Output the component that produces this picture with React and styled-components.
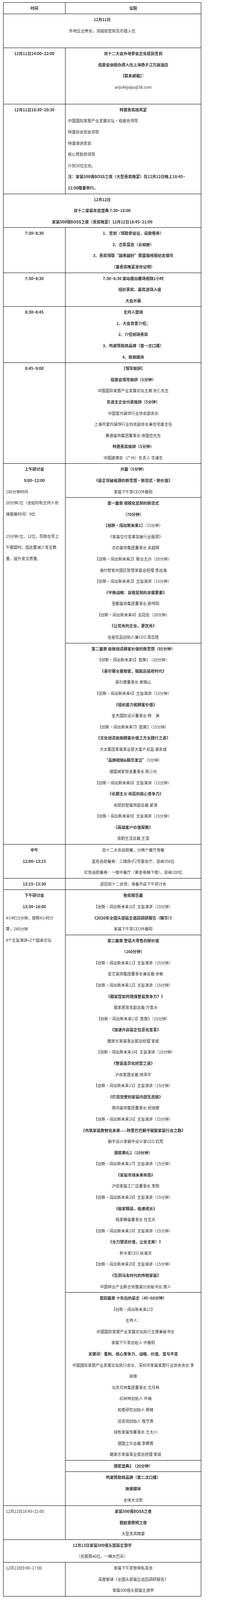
import styled, { createGlobalStyle } from "styled-components";

// the shot is taken from a 4096px tall viewport and stretched to 4298,
// so every vertical size is laid out at 4096 / 4298 of the reference
const LINE = 28.58;

const GlobalStyle = createGlobalStyle`
  body {
    margin: 0;
    background: #fff;
    font-family: "Noto Sans CJK SC", "Noto Sans", sans-serif;
    color: #333;
  }
`;

const Page = styled.div`
  padding: 5.7px 0 0 8px;
`;

const Sheet = styled.div`
  width: 508px;
  box-sizing: border-box;
  border: 1px solid #000;
  border-bottom: none;
  font-size: 10px;
`;

const Row = styled.div`
  display: grid;
  grid-template-columns: ${(p) => (p.$full ? "1fr" : "159px 1fr")};
  border-bottom: 1px solid #000;
`;

const Side = styled.div`
  border-right: 1px solid #000;
  padding: 0 6px;
  min-width: 0;
`;

const Main = styled.div`
  display: flex;
  flex-direction: column;
  min-width: 0;
`;

const Block = styled.div`
  padding: 0 6px;
  & + & {
    border-top: 1px solid #000;
  }
`;

const Line = styled.div`
  height: ${LINE}px;
  line-height: ${LINE}px;
  white-space: nowrap;
  text-align: ${(p) => (p.$left ? "left" : "center")};
  font-weight: ${(p) => (p.$b ? 700 : 400)};
  padding-left: ${(p) => p.$shift || 0}px;
`;

const B = styled.b`
  font-weight: 700;
`;

export default function App() {
  return (
    <Page>
      <GlobalStyle />
      <Sheet>
        <Row>
          <Side>
            <Line $b>时间</Line>
          </Side>
          <Main>
            <Block>
              <Line $b>议程</Line>
            </Block>
          </Main>
        </Row>

        <Row $full>
          <Block>
            <Line $b>12月11日</Line>
            <Line>外地企业参会，请提前签到及办理入住</Line>
            <Line />
          </Block>
        </Row>

        <Row>
          <Side>
            <Line $b>12月11日14:00~22:00</Line>
          </Side>
          <Main>
            <Block>
              <Line $b>双十二大会外地参会企业提前签到</Line>
              <Line $b>组委会协助办理入住上海扬子江万丽酒店</Line>
              <Line $b>【联系邮箱】：</Line>
              <Line>anjukejiaju@58.com</Line>
              <Line />
            </Block>
          </Main>
        </Row>

        <Row>
          <Side>
            <Line $b>12月11日18:30~20:30</Line>
          </Side>
          <Main>
            <Block>
              <Line $b>特邀贵宾接风宴</Line>
              <Line $left>中国国际家居产业发展论坛·组委会领导</Line>
              <Line $left>特邀协会商会领导</Line>
              <Line $left>特邀演讲贵宾</Line>
              <Line $left>核心赞助商领导</Line>
              <Line $left>计划30位左右。</Line>
              <Line $left $b>注：家装500强BOSS之夜（大型贵宾晚宴）在12月12日晚上18:45~</Line>
              <Line $left $b>21:00隆重举行。</Line>
            </Block>
          </Main>
        </Row>

        <Row $full>
          <Block>
            <Line $b>12月12日</Line>
            <Line $b>双十二家装年度盛典 7:30~18:00</Line>
            <Line $b>家装500强BOSS之夜（贵宾晚宴）12月12日18:45~21:00</Line>
          </Block>
        </Row>

        <Row>
          <Side>
            <Line $b>7:30~8:30</Line>
          </Side>
          <Main>
            <Block>
              <Line $b>1、签到（领取参会证、自助餐券）</Line>
              <Line $b>2、合影留念（云相册）</Line>
              <Line $b>3、贵宾领取“越来越好”限量版纯银纪念银币</Line>
              <Line $b>（兼贵宾晚宴身份证明）</Line>
            </Block>
          </Main>
        </Row>

        <Row>
          <Side>
            <Line $b>7:30~8:30</Line>
          </Side>
          <Main>
            <Block>
              <Line $b>7:30~8:30 滚动播出暖场视频1小时</Line>
              <Line $b $shift={34}>组织贵宾、嘉宾进场入座</Line>
              <Line $b>大会开幕</Line>
            </Block>
          </Main>
        </Row>

        <Row>
          <Side>
            <Line $b>8:30~8:45</Line>
          </Side>
          <Main>
            <Block>
              <Line $b>主持人登场</Line>
              <Line $b>1、大会背景介绍；</Line>
              <Line $b>2、介绍到场贵宾</Line>
              <Line $b>3、鸣谢赞助商品牌（第一次口播）</Line>
              <Line $b>4、致谢媒体</Line>
            </Block>
          </Main>
        </Row>

        <Row>
          <Side>
            <Line $b>8:45~9:00</Line>
          </Side>
          <Main>
            <Block>
              <Line $b>【领导致辞】</Line>
              <Line $b>组委会领导致辞（5分钟）</Line>
              <Line>中国国际家居产业发展论坛主席 张仁先生</Line>
              <Line $b>东道主企业代表致辞（5分钟）</Line>
              <Line>中国室内装饰行业协会副会长</Line>
              <Line>上海市室内装饰行业协会副会长兼住宅委主任</Line>
              <Line>聚通装饰集团董事长 徐国俭先生</Line>
              <Line $b>特邀贵宾致辞（5分钟）</Line>
              <Line>中国建博会（广州）负责人 华谦生</Line>
            </Block>
          </Main>
        </Row>

        <Row>
          <Side>
            <Line $b>上午研讨会</Line>
            <Line $b>9:00~12:00</Line>
            <Line $left>180分钟时间</Line>
            <Line $left>20分钟/位（含延时和主持人衔</Line>
            <Line $left>接报幕时间）9位</Line>
            <Line />
            <Line $left>15分钟/位，12位，导致在早上</Line>
            <Line $left>午都超时。因此要减少发言数</Line>
            <Line $left>量，提升发言质量。</Line>
          </Side>
          <Main>
            <Block>
              <Line $b>开篇（5分钟）</Line>
              <Line $b>《装企突破瓶颈的新思想·新范式·新价值》</Line>
              <Line>家装下午茶CEO许春阳</Line>
            </Block>
            <Block>
              <Line $b>第一篇章 规模化复制的新范式</Line>
              <Line $b>（70分钟）</Line>
              <Line>
                <B>【创新·闯出新未来1】</B>（15分钟）
              </Line>
              <Line $shift={12}>《家装交付变革突破行业瓶颈》</Line>
              <Line $shift={12}>点石装饰集团董事长 袁超辉</Line>
              <Line>【创新·闯出新未来2】联合主办（20分钟）</Line>
              <Line>海尔智家中国区智慧家庭总经理 李远海</Line>
              <Line>【创新·闯出新未来3】主旨演讲（15分钟）</Line>
              <Line $b $shift={12}>《平推战略：自我复制的关键要素》</Line>
              <Line $shift={12}>圣都装饰集团董事长 颜伟阳</Line>
              <Line>【创新·闯出新未来4】总冠名（20分钟）</Line>
              <Line $b>《让优秀的企业，更优秀》</Line>
              <Line>全屋优品创始人兼CEO 周志胜</Line>
            </Block>
            <Block>
              <Line $b>第二篇章 极致创造顾客价值的新思想（85分钟）</Line>
              <Line>【创新·闯出新未来5】首席1 （20分钟）</Line>
              <Line $b>《喜尔康全屋智能，赋能后装修时代》</Line>
              <Line>喜尔康董事长 吴锡山</Line>
              <Line>【创新·闯出新未来6】主旨演讲（15分钟）</Line>
              <Line $b $shift={12}>《组织能力和顾客价值》</Line>
              <Line $shift={12}>星杰国际设计董事长 杨　渊</Line>
              <Line>【创新·闯出新未来7】首席2（15分钟）</Line>
              <Line $b>《文化创造极致顾客价值之方太践行之道》</Line>
              <Line>方太集团家装事业部大客户总监 谢永成</Line>
              <Line>
                <B>“品牌视频&amp;精华发言”</B>（5分钟）
              </Line>
              <Line>德国城家管道董事长 陈小光</Line>
              <Line>【创新·闯出新未来8】主旨演讲（15分钟）</Line>
              <Line $b $shift={12}>《长期主义 尚层的核心竞争力》</Line>
              <Line $shift={12}>尚层别墅装饰副总裁 翟涛</Line>
              <Line>【创新·闯出新未来9】主旨演讲（15分钟）</Line>
              <Line $b>《高端客户价值探索》</Line>
              <Line>喜鹊生活总裁 王滢</Line>
            </Block>
          </Main>
        </Row>

        <Row>
          <Side>
            <Line $b>中午</Line>
            <Line $b>12:00~13:15</Line>
          </Side>
          <Main>
            <Block>
              <Line>双十二大会自助餐，分两个餐厅用餐</Line>
              <Line>蓝色自助餐券：三楼扬子2号宴会厅，容纳350位</Line>
              <Line>红色自助餐券：一楼中餐厅（乘坐电梯下楼），容纳100位</Line>
            </Block>
          </Main>
        </Row>

        <Row>
          <Side>
            <Line $b>13:15~13:30</Line>
          </Side>
          <Main>
            <Block>
              <Line>返回双十二会场，准备开启下午研讨会</Line>
            </Block>
          </Main>
        </Row>

        <Row>
          <Side>
            <Line $b>下午研讨会</Line>
            <Line $b>13:30~18:00</Line>
            <Line $left>4小时15分钟，按照4小时计</Line>
            <Line $left>算，240分钟</Line>
            <Line $left>9个主旨演讲+2个圆桌论坛</Line>
          </Side>
          <Main>
            <Block>
              <Line $b>智库报告篇</Line>
              <Line>【创新·闯出新未来10】主旨演讲（15分钟）</Line>
              <Line $b>《2020年全国头部装企巡回调研报告（精华）》</Line>
              <Line>家装下午茶CEO许春阳</Line>
            </Block>
            <Block>
              <Line $b>第三篇章 整装大零售的新价值</Line>
              <Line $b>（160分钟）</Line>
              <Line>【创新·闯出新未来11】主旨演讲（15分钟）</Line>
              <Line $shift={12}>星艺装饰集团董事长兼总裁 余敏</Line>
              <Line>【创新·闯出新未来12】主旨演讲（15分钟）</Line>
              <Line $b $shift={12}>《靓家居如何增强整装竞争力？》</Line>
              <Line $shift={12}>靓家居常务副总裁 万雪冰</Line>
              <Line>【创新·闯出新未来13】首席3（15分钟）</Line>
              <Line $b $shift={12}>《加速开启装企信息化变革》</Line>
              <Line>酷家乐家装事业部总经理 家成</Line>
              <Line $shift={12}>【创新·闯出新未来14】主旨演讲（15分钟）</Line>
              <Line $b>《整装差异化经营之道》</Line>
              <Line>沪尚茗居总裁 徐泽宇</Line>
              <Line>【创新·闯出新未来15】主旨演讲（15分钟）</Line>
              <Line $b $shift={12}>《打造完整的家装内部生态链》</Line>
              <Line $shift={12}>南鸿装饰集团董事长 祝旭慷</Line>
              <Line>【创新·闯出新未来16】主旨演讲（15分钟）</Line>
              <Line $b>《共筑家装数智化未来——阿里巴巴躺平赋能家装行业之路》</Line>
              <Line $shift={12}>躺平设计家躺平设计家CEO 石梵</Line>
              <Line $b>颁奖典礼1（10分钟）</Line>
              <Line>【创新·闯出新未来17】主旨演讲（15分钟）</Line>
              <Line $b $shift={12}>《家装市场未来布局》</Line>
              <Line $shift={12}>沪佳家装工厂店董事长 李刚</Line>
              <Line>【创新·闯出新未来18】主旨演讲（15分钟）</Line>
              <Line $b $shift={12}>《极家精装，极速成长》</Line>
              <Line $shift={12}>极家精装董事长 任志天</Line>
              <Line>【创新·闯出新未来19】主旨演讲（15分钟）</Line>
              <Line $b $shift={12}>《全力塑造价值，让业主爽！》</Line>
              <Line $shift={12}>积木家CEO 尚海洋</Line>
              <Line>【创新·闯出新未来20】主旨演讲（15分钟）</Line>
              <Line $b $shift={12}>《告别马车时代的传统家装》</Line>
              <Line $shift={12}>中国林业产业联合会整装分会秘书长 唐人</Line>
            </Block>
            <Block>
              <Line $b>第四篇章 十年后的装企（45~60分钟）</Line>
              <Line>【创新·闯出新未来21】</Line>
              <Line>主持人：</Line>
              <Line $shift={12}>中国国际家居产业发展论坛执行主席兼秘书长</Line>
              <Line>家装下午茶创始人 许春阳</Line>
              <Line $b>关键词：重构、核心竞争力、战略、价值、变与不变</Line>
              <Line>中国国际家居产业发展论坛执行会长、深圳市家装家居行业协会会长 李</Line>
              <Line>晓锋</Line>
              <Line $shift={12}>北京月林集团董事长 尤月林</Line>
              <Line $shift={12}>红树林创始人 许瑞</Line>
              <Line $shift={12}>知者研究创始人 穆峰</Line>
              <Line $shift={12}>远咨询创始人 程守真</Line>
              <Line $shift={12}>绿色家装饰董事长 王大川</Line>
              <Line $shift={12}>德国立乐总裁 李腾霄</Line>
              <Line $shift={12}>酷家乐家装事业部总经理 家成</Line>
            </Block>
            <Block>
              <Line $b>颁奖盛典2 （20分钟）</Line>
            </Block>
            <Block>
              <Line $b>鸣谢赞助商品牌（第二次口播）</Line>
              <Line $b>致谢媒体</Line>
              <Line>全体大合影</Line>
            </Block>
          </Main>
        </Row>

        <Row>
          <Side>
            <Line $left>12月12日18:45~21:00</Line>
          </Side>
          <Main>
            <Block>
              <Line $b>家装500强BOSS之夜</Line>
              <Line $b>暨欧普照明之夜</Line>
              <Line>大型贵宾晚宴</Line>
            </Block>
          </Main>
        </Row>

        <Row $full>
          <Block>
            <Line $b>12月13日家装500强头部装企游学</Line>
            <Line>（名额限40位，一辆大巴车）</Line>
          </Block>
        </Row>

        <Row>
          <Side>
            <Line $left>12月13日9:00~17:00</Line>
          </Side>
          <Main>
            <Block>
              <Line>家装下午茶智库私享会</Line>
              <Line>深度解读《全国头部装企巡回调研报告》</Line>
              <Line>家装500强头部装企游学</Line>
            </Block>
          </Main>
        </Row>
      </Sheet>
    </Page>
  );
}
